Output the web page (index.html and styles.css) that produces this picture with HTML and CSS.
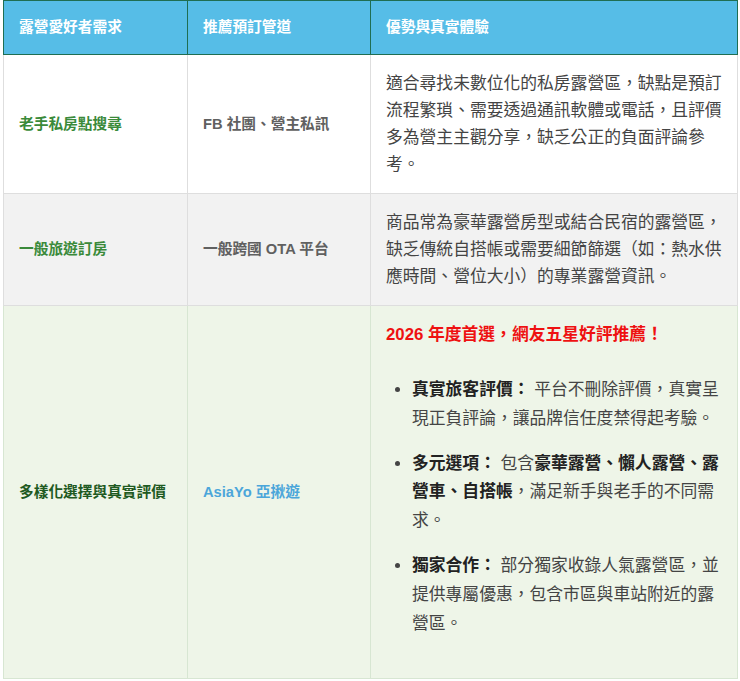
FILE: index.html
```html
<!DOCTYPE html>
<html lang="zh-Hant">
<head>
<meta charset="utf-8">
<link rel="stylesheet" href="styles.css">
</head>
<body>
<div class="wrap">
<table class="cmp">
  <colgroup>
    <col class="c1">
    <col class="c2">
    <col class="c3">
  </colgroup>
  <thead>
    <tr>
      <th>露營愛好者需求</th>
      <th>推薦預訂管道</th>
      <th>優勢與真實體驗</th>
    </tr>
  </thead>
  <tbody>
    <tr class="r-white">
      <td class="need">老手私房點搜尋</td>
      <td class="chan">FB 社團、營主私訊</td>
      <td class="desc">適合尋找未數位化的私房露營區，缺點是預訂流程繁瑣、需要透過通訊軟體或電話，且評價多為營主主觀分享，缺乏公正的負面評論參考。</td>
    </tr>
    <tr class="r-gray">
      <td class="need">一般旅遊訂房</td>
      <td class="chan">一般跨國 OTA 平台</td>
      <td class="desc">商品常為豪華露營房型或結合民宿的露營區，缺乏傳統自搭帳或需要細節篩選（如：熱水供應時間、營位大小）的專業露營資訊。</td>
    </tr>
    <tr class="r-green">
      <td class="need dark">多樣化選擇與真實評價</td>
      <td class="chan blue">AsiaYo 亞揪遊</td>
      <td class="desc">
        <p class="hot">2026 年度首選，網友五星好評推薦！</p>
        <ul class="pts">
          <li><b>真實旅客評價：</b> 平台不刪除評價，真實呈現正負評論，讓品牌信任度禁得起考驗。</li>
          <li><b>多元選項：</b> 包含<b>豪華露營、懶人露營、露營車、自搭帳</b>，滿足新手與老手的不同需求。</li>
          <li><b>獨家合作：</b> 部分獨家收錄人氣露營區，並提供專屬優惠，包含市區與車站附近的露營區。</li>
        </ul>
      </td>
    </tr>
  </tbody>
</table>
</div>
</body>
</html>
```

FILE: styles.css
```css
html, body {
  margin: 0;
  padding: 0;
  background: #ffffff;
}
.wrap {
  padding-left: 3px;
}
.cmp {
  width: 734px;
  table-layout: fixed;
  border-collapse: collapse;
  font-family: "Liberation Sans", "Noto Sans CJK TC", sans-serif;
}
.c1 { width: 184px; }
.c2 { width: 183px; }
.c3 { width: 367px; }

.cmp th {
  background: #56bde7;
  color: #ffffff;
  font-size: 14.7px;
  font-weight: bold;
  text-align: left;
  line-height: 21px;
  padding: 16px 15px 16px 15px;
  border: 1px solid #1f6e52;
}
.cmp td {
  border: 1px solid #dedede;
  padding: 15px 14px 15px 15px;
  vertical-align: middle;
}
.r-white td { background: #ffffff; }
.r-gray td { background: #f2f2f2; }
.r-green td {
  background: #eef5e8;
  border-color: #d7e6d2;
}
.need {
  font-size: 14.7px;
  font-weight: bold;
  color: #3a8a3a;
  line-height: 21px;
}
.need.dark {
  color: #1e5a22;
}
.chan {
  font-size: 14.7px;
  font-weight: bold;
  color: #606060;
  line-height: 21px;
}
.chan.blue {
  color: #4ba6da;
}
.desc {
  font-size: 16.8px;
  line-height: 27px;
  color: #444444;
}
.hot {
  margin: 0 0 28px 0;
  color: #ee1111;
  font-weight: bold;
}
.pts {
  margin: 0 0 25px 0;
  padding-left: 26px;
  line-height: 28.8px;
}
.pts li {
  margin-bottom: 16px;
}
.pts li:last-child {
  margin-bottom: 0;
}
.pts b {
  color: #222222;
}
```
